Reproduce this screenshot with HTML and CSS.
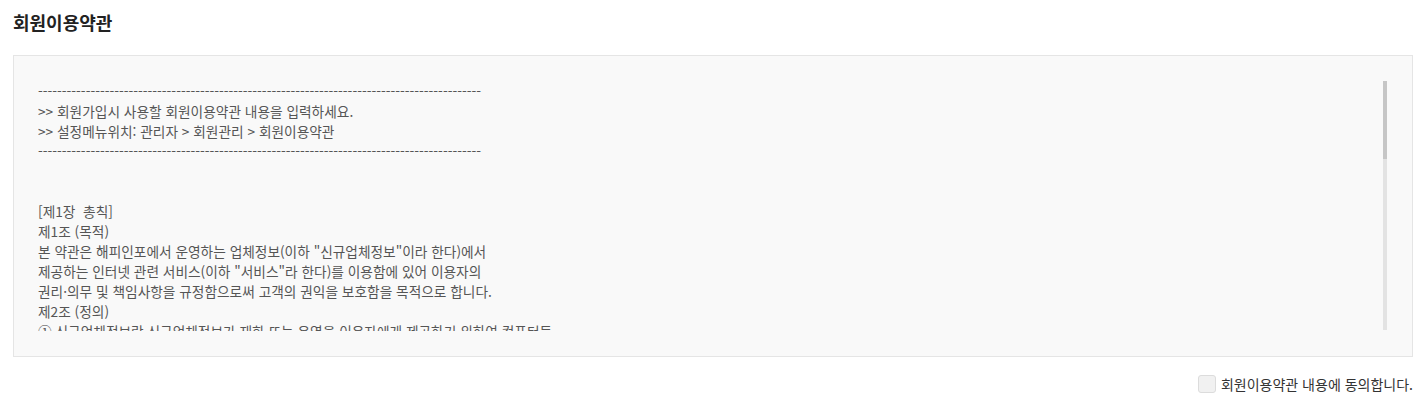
FILE: index.html
```html
<!DOCTYPE html>
<html lang="ko">
<head>
<meta charset="UTF-8">
<meta name="viewport" content="width=device-width, initial-scale=1.0">
<title>회원이용약관</title>
<link rel="stylesheet" href="styles.css">
</head>
<body>
<h2 class="terms-title">회원이용약관</h2>
<div class="terms-box">
    <div class="terms-scroll">---------------------------------------------------------------------------------------------
&gt;&gt; 회원가입시 사용할 회원이용약관 내용을 입력하세요.
&gt;&gt; 설정메뉴위치: 관리자 &gt; 회원관리 &gt; 회원이용약관
---------------------------------------------------------------------------------------------


[제1장  총칙]
제1조 (목적)
본 약관은 해피인포에서 운영하는 업체정보(이하 "신규업체정보"이라 한다)에서
제공하는 인터넷 관련 서비스(이하 "서비스"라 한다)를 이용함에 있어 이용자의
권리·의무 및 책임사항을 규정함으로써 고객의 권익을 보호함을 목적으로 합니다.
제2조 (정의)
① 신규업체정보란 신규업체정보가 재화 또는 용역을 이용자에게 제공하기 위하여 컴퓨터등
정보통신설비를 이용하여 재화 또는 용역을 거래할 수 있도록 설정한 가상의 영업장을 말합니다.
② 이용자란 신규업체정보에 접속하여 이 약관에 따라 신규업체정보가 제공하는 서비스를 받는 회원 및 비회원을 말합니다.
③ 회원이라 함은 신규업체정보에 개인정보를 제공하여 회원등록을 한 자로서, 서비스를 계속적으로 이용할 수 있는 자를 말합니다.
④ 비회원이라 함은 회원에 가입하지 않고 신규업체정보가 제공하는 서비스를 이용하는 자를 말합니다.
제3조 (약관의 명시와 개정)
① 신규업체정보는 이 약관의 내용과 상호, 영업소 소재지, 대표자의 성명, 사업자등록번호, 연락처 등을
이용자가 알 수 있도록 초기 서비스화면에 게시합니다.</div>
    <div class="scroll-track"><div class="scroll-thumb"></div></div>
</div>
<div class="agree-row">
    <label class="agree-label"><input type="checkbox" class="agree-check"> 회원이용약관 내용에 동의합니다.</label>
</div>
</body>
</html>
```

FILE: styles.css
```css
body {
    margin: 0;
    padding: 0 11px 0 13px;
    font-family: "Noto Sans CJK KR", "Noto Sans", sans-serif;
    background: #fff;
    color: #333;
}

.terms-title {
    margin: 0;
    padding-top: 10px;
    font-size: 18px;
    line-height: 24px;
    font-weight: bold;
    color: #222;
}

.terms-box {
    display: flex;
    margin-top: 21px;
    padding: 25px 25px 25px 24px;
    background-color: #f9f9f9;
    border: 1px solid #e5e5e5;
}

/* 본문 영역 (스크롤바는 아래 track/thumb 로 표시) */
.terms-scroll {
    flex: 1;
    height: 250px;
    overflow: hidden;
    white-space: pre;
    font-size: 13.7px;
    line-height: 20px;
    color: #555;
}

.scroll-track {
    width: 4px;
    height: 249px;
    background-color: #e3e3e3;
}

.scroll-thumb {
    height: 78px;
    background-color: #c6c6c6;
}

.agree-row {
    display: flex;
    justify-content: flex-end;
    margin-top: 17px;
}

.agree-label {
    display: flex;
    align-items: center;
    gap: 5px;
    font-size: 14px;
    line-height: 20px;
    color: #333;
}

.agree-check {
    appearance: none;
    margin: 0;
    width: 18px;
    height: 18px;
    background-color: #f1f1f1;
    border: 1px solid #dcdcdc;
    border-radius: 3px;
}
```
